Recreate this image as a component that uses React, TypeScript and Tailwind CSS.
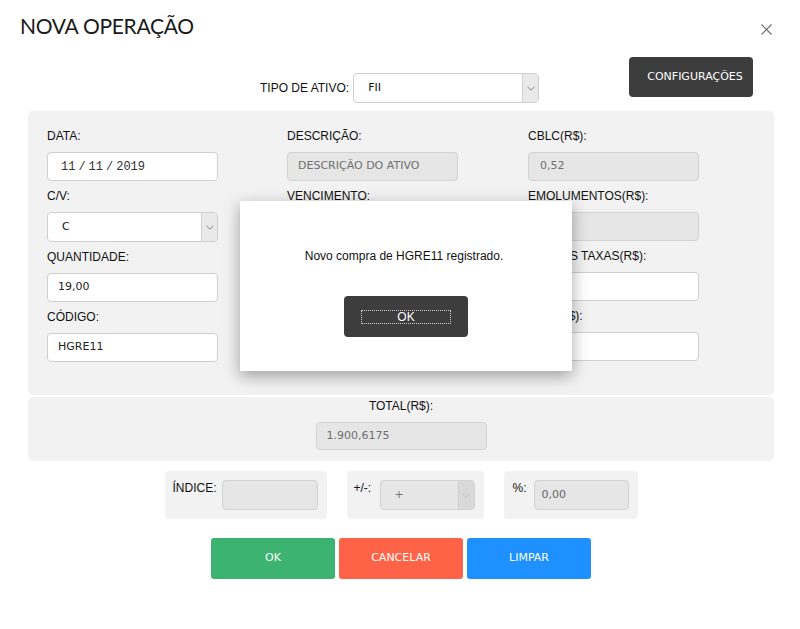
import React from "react";

const inputFont = "font-['DejaVu_Sans','Verdana',sans-serif] text-[11px]";

function Label({ children }: { children: React.ReactNode }) {
  return <div className="h-[14px] leading-[14px] text-[12px] mb-[9px] whitespace-nowrap text-[#111]">{children}</div>;
}

function Input({ value, disabled, pad = 10 }: { value?: string; disabled?: boolean; pad?: number }) {
  return (
    <div
      className={`h-[29px] w-[171px] rounded-[4px] border flex items-center whitespace-nowrap ${
        disabled ? "bg-[#e6e6e6] border-[#d2d2d2] text-[#707070]" : "bg-white border-[#cfcfcf] text-[#222]"
      } ${inputFont}`}
      style={{ paddingLeft: pad }}
    >
      {value}
    </div>
  );
}

function Chevron({ color = "#8a8a8a" }: { color?: string }) {
  return (
    <svg width="8" height="5" viewBox="0 0 8 5">
      <path d="M0.5 0.8 L4 4.2 L7.5 0.8" fill="none" stroke={color} strokeWidth="1" />
    </svg>
  );
}

function Select({ value, width, height = 29, disabled, pad = 14 }: { value: string; width: number; height?: number; disabled?: boolean; pad?: number }) {
  return (
    <div
      className={`flex rounded-[4px] border overflow-hidden ${
        disabled ? "bg-[#e6e6e6] border-[#d2d2d2] text-[#777]" : "bg-white border-[#cfcfcf] text-[#111]"
      } ${inputFont}`}
      style={{ width, height }}
    >
      <div className="flex-1 flex items-center" style={{ paddingLeft: pad }}>
        {value}
      </div>
      <div
        className={`w-[16px] flex items-center justify-center border-l ${
          disabled ? "bg-[#d9d9d9] border-[#d0d0d0]" : "bg-[#e9e9e9] border-[#d0d0d0]"
        }`}
      >
        <Chevron color={disabled ? "#bdbdbd" : "#8a8a8a"} />
      </div>
    </div>
  );
}

function Field({ label, children }: { label: string; children: React.ReactNode }) {
  return (
    <div className="flex flex-col">
      <Label>{label}</Label>
      {children}
    </div>
  );
}

export default function App() {
  return (
    <div className="w-[800px] h-[629px] bg-white relative overflow-hidden font-['Liberation_Sans',Arial,sans-serif] text-[12px] text-[#111]">
      {/* header */}
      <div className="flex items-start justify-between pt-[13px] pl-[20px] pr-[28px]">
        <div className="font-['Lato',sans-serif] text-[21px] tracking-[-0.3px] leading-[26px] text-[#1a1a1a]">NOVA OPERAÇÃO</div>
        <svg className="mt-[11px]" width="11" height="11" viewBox="0 0 11 11">
          <path d="M0.5 0.5 L10.5 10.5 M10.5 0.5 L0.5 10.5" stroke="#6b6b6b" strokeWidth="1.2" />
        </svg>
      </div>

      {/* tipo row */}
      <div className="mt-[18px] h-[54px] flex items-start">
        <div className="ml-[260px] mt-[16px] flex items-center">
          <span className="whitespace-nowrap">TIPO DE ATIVO:</span>
          <div className="ml-[4px]">
            <Select value="FII" width={186} height={30} pad={14} />
          </div>
        </div>
        <div className="ml-auto mr-[47px] w-[124px] h-[40px] rounded-[4px] bg-[#3d3d3d] text-white flex items-center justify-center pl-[8px] font-['DejaVu_Sans',sans-serif] text-[11px]">
          CONFIGURAÇÕES
        </div>
      </div>

      {/* main panel */}
      <div className="ml-[28px] mr-[26px] bg-[#f2f2f2] rounded-[5px] pt-[18px] pb-[33px] pl-[19px] flex">
        <div className="w-[240px] flex flex-col gap-[8px]">
          <Field label="DATA:">
            <div className="h-[29px] w-[171px] rounded-[4px] border bg-white border-[#cfcfcf] text-[#333] flex items-center pl-[13px] font-['Liberation_Mono',monospace] text-[12px]">
              <span>11</span>
              <span className="mx-[3px]">/</span>
              <span>11</span>
              <span className="mx-[3px]">/</span>
              <span>2019</span>
            </div>
          </Field>
          <Field label="C/V:">
            <Select value="C" width={171} height={30} pad={14} />
          </Field>
          <Field label="QUANTIDADE:">
            <Input value="19,00" />
          </Field>
          <Field label="CÓDIGO:">
            <Input value="HGRE11" />
          </Field>
        </div>
        <div className="w-[241px] flex flex-col gap-[8px]">
          <Field label="DESCRIÇÃO:">
            <Input value="DESCRIÇÃO DO ATIVO" disabled />
          </Field>
          <Field label="VENCIMENTO:">
            <Input value="" />
          </Field>
          <Field label="">
            <Input value="" />
          </Field>
          <Field label="">
            <Input value="" />
          </Field>
        </div>
        <div className="flex flex-col gap-[8px]">
          <Field label="CBLC(R$):">
            <Input value="0,52" disabled pad={11} />
          </Field>
          <Field label="EMOLUMENTOS(R$):">
            <Input value="" disabled pad={11} />
          </Field>
          <Field label="OUTRAS TAXAS(R$):">
            <Input value="" />
          </Field>
          <Field label="IRRF(R$):">
            <Input value="" />
          </Field>
        </div>
      </div>

      {/* total */}
      <div className="ml-[28px] mr-[26px] mt-[2px] h-[64px] bg-[#f2f2f2] rounded-[5px] flex flex-col items-center">
        <div className="h-[14px] leading-[14px] mt-[2px] mb-[9px]">TOTAL(R$):</div>
        <div className="h-[28px] w-[171px] rounded-[4px] border bg-[#e6e6e6] border-[#d2d2d2] text-[#707070] flex items-center pl-[10px] font-['DejaVu_Sans',sans-serif] text-[11px]">
          1.900,6175
        </div>
      </div>

      {/* index row */}
      <div className="mt-[10px] flex justify-center gap-[20px] pl-[2px]">
        <div className="w-[162px] h-[48px] bg-[#f2f2f2] rounded-[4px] flex items-start pl-[8px] pr-[9px] py-[9px]">
          <span className="leading-[14px] mt-[1px]">ÍNDICE:</span>
          <div className="ml-auto h-[30px] w-[96px] rounded-[4px] border bg-[#e6e6e6] border-[#d2d2d2]" />
        </div>
        <div className="w-[137px] h-[48px] bg-[#f2f2f2] rounded-[4px] flex items-start pl-[7px] pr-[9px] py-[9px]">
          <span className="leading-[14px] mt-[1px]">+/-:</span>
          <div className="ml-auto">
            <Select value="+" width={95} height={30} disabled pad={14} />
          </div>
        </div>
        <div className="w-[134px] h-[48px] bg-[#f2f2f2] rounded-[4px] flex items-start pl-[9px] pr-[9px] py-[9px]">
          <span className="leading-[14px] mt-[1px]">%:</span>
          <div className="ml-auto h-[30px] w-[95px] rounded-[4px] border bg-[#e6e6e6] border-[#d2d2d2] text-[#666] flex items-center pl-[7px] font-['DejaVu_Sans',sans-serif] text-[11px]">
            0,00
          </div>
        </div>
      </div>

      {/* buttons */}
      <div className="mt-[19px] flex justify-center gap-[4px] pl-[2px] font-['DejaVu_Sans',sans-serif] text-[11px] text-white">
        <div className="w-[124px] h-[41px] rounded-[3px] bg-[#3cb371] flex items-center justify-center">OK</div>
        <div className="w-[124px] h-[41px] rounded-[3px] bg-[#ff6347] flex items-center justify-center">CANCELAR</div>
        <div className="w-[124px] h-[41px] rounded-[3px] bg-[#1e90ff] flex items-center justify-center">LIMPAR</div>
      </div>

      {/* alert modal */}
      <div className="absolute left-[240px] top-[201px] w-[332px] h-[170px] bg-white shadow-[0_5px_15px_rgba(0,0,0,0.35)] flex flex-col items-center z-10">
        <div className="mt-[48px] leading-[14px] text-[12px] text-[#111] pr-[4px]">Novo compra de HGRE11 registrado.</div>
        <div className="mt-[33px] w-[124px] h-[41px] rounded-[4px] bg-[#3d3d3d] flex items-center justify-center">
          <div className="w-[90px] h-[14px] border border-dotted border-[#cfcfcf] flex items-center justify-center text-white text-[12px] leading-[12px]">
            OK
          </div>
        </div>
      </div>
    </div>
  );
}
